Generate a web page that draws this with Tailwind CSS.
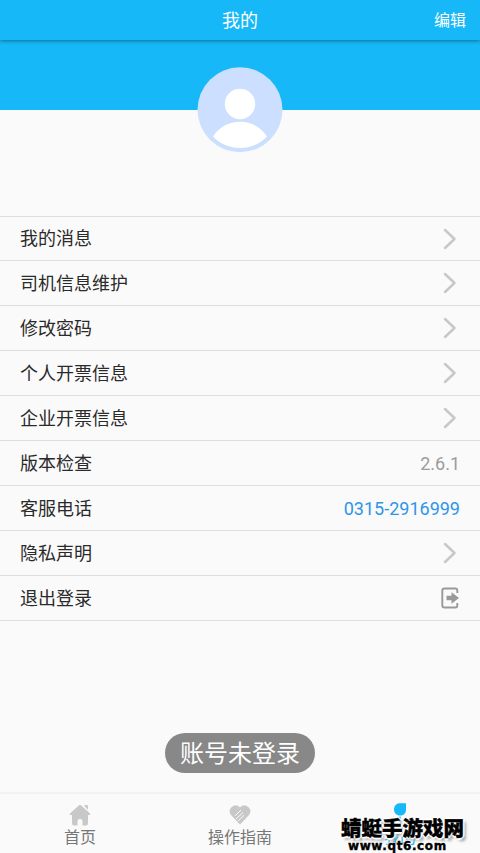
<!DOCTYPE html>
<html lang="zh-CN">
<head>
<meta charset="utf-8">
<title>我的</title>
<script src="https://cdn.jsdelivr.net/npm/@tailwindcss/browser@4"></script>
</head>
<body class="relative flex h-[853px] w-[480px] flex-col overflow-hidden bg-[#fafafa] font-[Roboto,'Noto_Sans_CJK_SC',sans-serif] text-[#2a2a2a]">
<svg class="hidden">
  <symbol id="chevron" viewBox="0 0 14 22"><path d="M2 2l9.500 9L2 20" fill="none" stroke="#c8c8c8" stroke-width="2.500" stroke-linecap="round" stroke-linejoin="round"/></symbol>
</svg>
<header class="relative z-10 grid h-10 shrink-0 grid-cols-3 items-center bg-[#16b8f8] px-[14px] pt-[2px] text-white shadow-[0_1px_4px_rgba(0,0,0,0.4)]">
  <span></span>
  <h1 class="text-center text-[18px] leading-[38px]">我的</h1>
  <button class="text-right text-[16px] leading-[38px]">编辑</button>
</header>
<section class="flex h-[70px] shrink-0 items-start justify-center bg-[#16b8f8] pt-[27px]">
  <svg class="h-[86px] w-[86px] shrink-0" viewBox="0 0 86 86">
    <circle cx="43" cy="42.700" r="42.500" fill="#ccdfff"/>
    <circle cx="43" cy="37" r="15.200" fill="#fff"/>
    <path d="M16 69.500C22 60 32 54.800 43 54.800S64 60 70 69.500C63 77 53 81 43 81S23 77 16 69.500Z" fill="#fff"/>
  </svg>
</section>
<main class="mt-[106px] shrink-0 border-t border-[#dedede] text-[18px]">
  <div class="flex h-[44px] items-center justify-between border-b border-[#dedede] pr-[23px] pl-5"><span>我的消息</span><svg class="h-[22px] w-[14px]"><use href="#chevron"/></svg></div>
  <div class="flex h-[45px] items-center justify-between border-b border-[#dedede] pr-[23px] pl-5"><span>司机信息维护</span><svg class="h-[22px] w-[14px]"><use href="#chevron"/></svg></div>
  <div class="flex h-[45px] items-center justify-between border-b border-[#dedede] pr-[23px] pl-5"><span>修改密码</span><svg class="h-[22px] w-[14px]"><use href="#chevron"/></svg></div>
  <div class="flex h-[45px] items-center justify-between border-b border-[#dedede] pr-[23px] pl-5"><span>个人开票信息</span><svg class="h-[22px] w-[14px]"><use href="#chevron"/></svg></div>
  <div class="flex h-[45px] items-center justify-between border-b border-[#dedede] pr-[23px] pl-5"><span>企业开票信息</span><svg class="h-[22px] w-[14px]"><use href="#chevron"/></svg></div>
  <div class="flex h-[45px] items-center justify-between border-b border-[#dedede] pr-5 pl-5"><span>版本检查</span><span class="text-[#9c9c9c]">2.6.1</span></div>
  <div class="flex h-[45px] items-center justify-between border-b border-[#dedede] pr-5 pl-5"><span>客服电话</span><span class="text-[#2f95e8]">0315-2916999</span></div>
  <div class="flex h-[45px] items-center justify-between border-b border-[#dedede] pr-[23px] pl-5"><span>隐私声明</span><svg class="h-[22px] w-[14px]"><use href="#chevron"/></svg></div>
  <div class="flex h-[45px] items-center justify-between border-b border-[#dedede] pr-5 pl-5"><span>退出登录</span>
    <svg class="h-[22px] w-5" viewBox="0 0 20 22"><path d="M17.300 6V3.500Q17.300 1.500 15.300 1.500H4.500Q2.300 1.500 2.300 3.500V18.500Q2.300 20.500 4.500 20.500H15.300Q17.300 20.500 17.300 18.500V16" fill="none" stroke="#999" stroke-width="1.900"/><path d="M6.500 8.700H11.500V5.300L19 11L11.500 16.700V13.300H6.500Z" fill="#999"/></svg>
  </div>
</main>
<div class="mt-28 flex h-10 w-[150px] shrink-0 items-center justify-center self-center rounded-full bg-[#888] pt-[2px] text-[24px] text-white">账号未登录</div>
<nav class="mt-auto grid h-[61px] shrink-0 grid-cols-3 border-t-2 border-[#f2f2f2] text-[16px] text-[#777]">
  <div class="flex flex-col items-center pt-[9px]">
    <svg class="h-[25px] w-[22px]" viewBox="0 0 22 25"><path d="M1 12Q0 11.500 1.500 10L9.500 2.700Q11 1.500 12.500 2.700L20.500 10Q22 11.500 21 12H19V20Q19 22.500 17 22.500H13.500V18Q13.500 16 11 16T8.500 18V22.500H5Q3 22.500 3 20V12ZM15.500 2H18Q19 2 19 3V6.700L15.500 3.300Z" fill="#c8c8c8"/></svg>
    <span class="leading-5">首页</span>
  </div>
  <div class="flex flex-col items-center pt-[9px]">
    <svg class="h-[25px] w-[22px]" viewBox="0 0 22 25"><path d="M11 21.500L2 12Q-1 8 2 4.800C5 1.200 8.500 1.500 11 4.500C13.500 1.500 17 1.200 20 4.800Q23 8 20 12Z" fill="#c8c8c8"/><path d="M6 13L12 7M7 16L14 9.500M9 18L15 12.300" fill="none" stroke="#fafafa" stroke-width="1"/></svg>
    <span class="leading-5">操作指南</span>
  </div>
  <div class="flex flex-col items-center pt-[9px] text-[#16b8f8]">
    <svg class="h-[25px] w-[22px]" viewBox="0 0 22 25"><path d="M11 .3H17V6.500C17 10.500 14.500 12.500 11 12.500S5 10 5 6.500S7.500 .3 11 .3ZM10.300 13.500H11.700V21H10.300Z" fill="#16b8f8"/></svg>
    <span class="leading-5">我的</span>
  </div>
</nav>
<div class="absolute top-[816px] left-[341px] z-20 w-[124px] text-black">
  <div class="text-[20.500px] leading-[26px] font-black whitespace-nowrap [-webkit-text-stroke:0.4px_#000] [text-shadow:0_0_2px_#fff,2px_0_1px_#fff,-2px_0_1px_#fff,0_2px_1px_#fff,0_-2px_1px_#fff,3px_3px_3px_#999]">蜻蜓手游戏网</div>
  <div class="-mt-[3px] ml-[7px] font-['DejaVu_Sans','Liberation_Sans',sans-serif] text-[12px] leading-[14px] font-bold tracking-[0.6px] whitespace-nowrap [-webkit-text-stroke:0.4px_#000] [text-shadow:1px_0_1px_#fff,-1px_0_1px_#fff,0_1px_1px_#fff,0_-1px_1px_#fff]">www.qt6.com</div>
</div>
</body>
</html>
